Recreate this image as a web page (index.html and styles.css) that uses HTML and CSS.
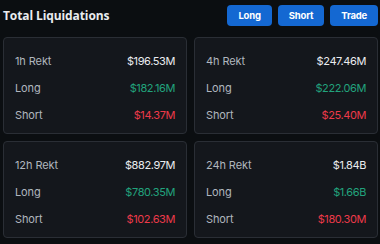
FILE: index.html
```html
<!DOCTYPE html>
<html>
<head>
<meta charset="utf-8">
<link rel="stylesheet" href="styles.css">
</head>
<body>
<div class="page">
  <header class="head">
    <h1 class="title">Total Liquidations</h1>
    <div class="btns">
      <button class="btn">Long</button>
      <button class="btn">Short</button>
      <button class="btn">Trade</button>
    </div>
  </header>
  <div class="grid">
    <div class="card">
      <div class="row"><span class="lbl">1h Rekt</span><span class="val">$196.53M</span></div>
      <div class="row"><span class="lbl">Long</span><span class="val up">$182.16M</span></div>
      <div class="row"><span class="lbl">Short</span><span class="val down">$14.37M</span></div>
    </div>
    <div class="card">
      <div class="row"><span class="lbl">4h Rekt</span><span class="val">$247.46M</span></div>
      <div class="row"><span class="lbl">Long</span><span class="val up">$222.06M</span></div>
      <div class="row"><span class="lbl">Short</span><span class="val down">$25.40M</span></div>
    </div>
    <div class="card">
      <div class="row"><span class="lbl">12h Rekt</span><span class="val">$882.97M</span></div>
      <div class="row"><span class="lbl">Long</span><span class="val up">$780.35M</span></div>
      <div class="row"><span class="lbl">Short</span><span class="val down">$102.63M</span></div>
    </div>
    <div class="card">
      <div class="row"><span class="lbl">24h Rekt</span><span class="val">$1.84B</span></div>
      <div class="row"><span class="lbl">Long</span><span class="val up">$1.66B</span></div>
      <div class="row"><span class="lbl">Short</span><span class="val down">$180.30M</span></div>
    </div>
  </div>
</div>
</body>
</html>
```
FILE: styles.css
```css
* { box-sizing: border-box; }
html, body { margin: 0; padding: 0; background: #0b0e11; }
body { font-family: Inter, "Noto Sans", sans-serif; color: #eaecef; }
.page { padding: 5px 2px 0 3px; width: 380px; }
.head { display: flex; justify-content: space-between; align-items: flex-start; height: 32px; }
.title { margin: 0; font-family: "Open Sans", sans-serif; font-weight: 700; font-size: 12px; line-height: 21px; letter-spacing: -0.1px; color: #eaecef; }
.btns { display: flex; gap: 6px; }
.btn { border: 0; border-radius: 4px; background: #1468d2; color: #fff; font-family: Inter, sans-serif; font-weight: 700; font-size: 9.5px; letter-spacing: -0.2px; height: 21px; padding: 0 11px; }
.grid { display: grid; grid-template-columns: 1fr 1fr; gap: 7px; }
.card { background: #14171c; border: 1px solid #2a2e35; border-radius: 4px; padding: 9px 11px 6px 11px; height: 97px; }
.row { display: flex; justify-content: space-between; align-items: center; height: 27px; font-size: 11px; }
.lbl { color: #b0b6be; letter-spacing: -0.1px; }
.val { color: #eaecef; letter-spacing: -0.4px; }
.up { color: #22a37c; }
.down { color: #ec3a4a; }
```
